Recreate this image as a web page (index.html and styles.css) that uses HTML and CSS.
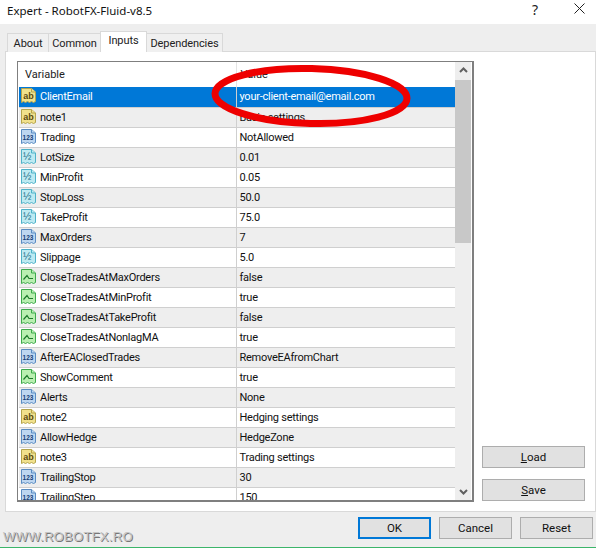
FILE: index.html
```html
<!DOCTYPE html>
<html>
<head>
  <title>Expert - RobotFX-Fluid-v8.5</title>
  <link rel="stylesheet" href="styles.css">
</head>
<body>
  <svg class="defs" width="0" height="0">
    <symbol id="page" viewBox="0 0 17 17">
      <path d="M1.500 1.500H11.500L15.500 5V14.500L13.500 15.500 11.500 14.500 9.500 15.500 7.500 14.500 5.500 15.500 3.500 14.500 1.500 15.500Z"/>
      <path class="fold" d="M11.500 1.500V5H15.500"/>
    </symbol>
  </svg>

  <header class="titlebar">
    <span class="title">Expert - RobotFX-Fluid-v8.5</span>
    <span class="help">?</span>
    <svg class="close" width="11" height="11" viewBox="0 0 11 11"><path d="M.5.5L10.500 10.500M10.500.5L.5 10.500"/></svg>
  </header>

  <nav class="tabs">
    <a class="tab about">About</a>
    <a class="tab common">Common</a>
    <a class="tab active">Inputs</a>
    <a class="tab deps">Dependencies</a>
  </nav>

  <main class="panel">
    <div class="list">
      <div class="list-body">
        <table class="inputs">
          <thead>
            <tr><th class="col-name">Variable</th><th>Value</th></tr>
          </thead>
          <tbody>
            <tr class="selected"><td><svg class="ic str" viewBox="0 0 17 17"><use href="#page"/><text x="3.200" y="11.500" class="ic-big">ab</text></svg>ClientEmail</td><td>your-client-email@email.com</td></tr>
            <tr class="odd"><td><svg class="ic str" viewBox="0 0 17 17"><use href="#page"/><text x="3.200" y="11.500" class="ic-big">ab</text></svg>note1</td><td>Basic settings</td></tr>
            <tr><td><svg class="ic int" viewBox="0 0 17 17"><use href="#page"/><text x="2.600" y="11.500" class="ic-small">123</text></svg>Trading</td><td>NotAllowed</td></tr>
            <tr class="odd"><td><svg class="ic dbl" viewBox="0 0 17 17"><use href="#page"/><text x="3" y="11.500" class="ic-mid">½</text></svg>LotSize</td><td>0.01</td></tr>
            <tr><td><svg class="ic dbl" viewBox="0 0 17 17"><use href="#page"/><text x="3" y="11.500" class="ic-mid">½</text></svg>MinProfit</td><td>0.05</td></tr>
            <tr class="odd"><td><svg class="ic dbl" viewBox="0 0 17 17"><use href="#page"/><text x="3" y="11.500" class="ic-mid">½</text></svg>StopLoss</td><td>50.0</td></tr>
            <tr><td><svg class="ic dbl" viewBox="0 0 17 17"><use href="#page"/><text x="3" y="11.500" class="ic-mid">½</text></svg>TakeProfit</td><td>75.0</td></tr>
            <tr class="odd"><td><svg class="ic int" viewBox="0 0 17 17"><use href="#page"/><text x="2.600" y="11.500" class="ic-small">123</text></svg>MaxOrders</td><td>7</td></tr>
            <tr><td><svg class="ic dbl" viewBox="0 0 17 17"><use href="#page"/><text x="3" y="11.500" class="ic-mid">½</text></svg>Slippage</td><td>5.0</td></tr>
            <tr class="odd"><td><svg class="ic bool" viewBox="0 0 17 17"><use href="#page"/><path class="trend" d="M3.500 11.500L7 7.500 9 10.500H13"/></svg>CloseTradesAtMaxOrders</td><td>false</td></tr>
            <tr><td><svg class="ic bool" viewBox="0 0 17 17"><use href="#page"/><path class="trend" d="M3.500 11.500L7 7.500 9 10.500H13"/></svg>CloseTradesAtMinProfit</td><td>true</td></tr>
            <tr class="odd"><td><svg class="ic bool" viewBox="0 0 17 17"><use href="#page"/><path class="trend" d="M3.500 11.500L7 7.500 9 10.500H13"/></svg>CloseTradesAtTakeProfit</td><td>false</td></tr>
            <tr><td><svg class="ic bool" viewBox="0 0 17 17"><use href="#page"/><path class="trend" d="M3.500 11.500L7 7.500 9 10.500H13"/></svg>CloseTradesAtNonlagMA</td><td>true</td></tr>
            <tr class="odd"><td><svg class="ic int" viewBox="0 0 17 17"><use href="#page"/><text x="2.600" y="11.500" class="ic-small">123</text></svg>AfterEAClosedTrades</td><td>RemoveEAfromChart</td></tr>
            <tr><td><svg class="ic bool" viewBox="0 0 17 17"><use href="#page"/><path class="trend" d="M3.500 11.500L7 7.500 9 10.500H13"/></svg>ShowComment</td><td>true</td></tr>
            <tr class="odd"><td><svg class="ic int" viewBox="0 0 17 17"><use href="#page"/><text x="2.600" y="11.500" class="ic-small">123</text></svg>Alerts</td><td>None</td></tr>
            <tr><td><svg class="ic str" viewBox="0 0 17 17"><use href="#page"/><text x="3.200" y="11.500" class="ic-big">ab</text></svg>note2</td><td>Hedging settings</td></tr>
            <tr class="odd"><td><svg class="ic int" viewBox="0 0 17 17"><use href="#page"/><text x="2.600" y="11.500" class="ic-small">123</text></svg>AllowHedge</td><td>HedgeZone</td></tr>
            <tr><td><svg class="ic str" viewBox="0 0 17 17"><use href="#page"/><text x="3.200" y="11.500" class="ic-big">ab</text></svg>note3</td><td>Trading settings</td></tr>
            <tr class="odd"><td><svg class="ic int" viewBox="0 0 17 17"><use href="#page"/><text x="2.600" y="11.500" class="ic-small">123</text></svg>TrailingStop</td><td>30</td></tr>
            <tr><td><svg class="ic int" viewBox="0 0 17 17"><use href="#page"/><text x="2.600" y="11.500" class="ic-small">123</text></svg>TrailingStep</td><td>150</td></tr>
          </tbody>
        </table>
      </div>
      <div class="scrollbar">
        <svg class="arrow" width="9" height="6" viewBox="0 0 9 6"><path d="M1 5L4.500 1.500 8 5"/></svg>
        <div class="thumb"></div>
        <svg class="arrow down" width="9" height="6" viewBox="0 0 9 6"><path d="M1 1L4.500 4.500 8 1"/></svg>
      </div>
    </div>
    <div class="side">
      <button class="btn wide"><u>L</u>oad</button>
      <button class="btn wide"><u>S</u>ave</button>
    </div>
  </main>

  <footer class="bottom">
    <span class="watermark">WWW.ROBOTFX.RO</span>
    <div class="actions">
      <button class="btn default">OK</button>
      <button class="btn">Cancel</button>
      <button class="btn">Reset</button>
    </div>
  </footer>

  <!-- red marker drawn over the list -->
  <svg class="marker" width="204" height="68" viewBox="0 0 204 68">
    <ellipse cx="102" cy="34" rx="96" ry="27.500" transform="rotate(1.500 102 34)"/>
  </svg>
</body>
</html>
```
FILE: styles.css
```css
* {
  box-sizing: border-box;
}

body {
  position: relative;
  margin: 0;
  width: 596px;
  height: 548px;
  overflow: hidden;
  background-color: #eeeeee;
  border-bottom: 1px solid #3cb56a;
  font-family: Roboto, "Liberation Sans", sans-serif;
  font-size: 11px;
  color: #111;
}

.defs {
  position: absolute;
}

/* Title bar */
.titlebar {
  display: flex;
  align-items: center;
  height: 24px;
  padding: 0 11px 0 7px;
  background-color: #fff;
}

.title {
  flex: 1;
  font-family: "Noto Sans", sans-serif;
  font-size: 11.500px;
  position: relative;
  top: -2px;
}

.help {
  margin-right: 36px;
  font-family: "Noto Sans", sans-serif;
  font-size: 14px;
  color: #222;
  position: relative;
  top: -3px;
}

.close {
  position: relative;
  top: -4px;
}

.close path {
  stroke: #222;
  stroke-width: 1;
  fill: none;
}

/* Tabs */
.tabs {
  display: flex;
  align-items: flex-end;
  height: 28px;
  padding-left: 7px;
  margin-bottom: -1px;
}

.tab {
  height: 19px;
  padding-top: 2px;
  background-color: #f0f0f0;
  border: 1px solid #d9d9d9;
  border-bottom: none;
  border-left-width: 0;
  line-height: 15px;
  letter-spacing: -0.100px;
  text-align: center;
  color: #222;
}

.tab.about {
  width: 42px;
  border-left-width: 1px;
}

.tab.common {
  width: 52px;
}

.tab.deps {
  width: 76px;
}

.tab.active {
  position: relative;
  z-index: 1;
  width: 47px;
  height: 21px;
  background-color: #fff;
  padding-top: 1px;
  border-left-width: 1px;
  margin-left: -1px;
}

/* Panel */
.panel {
  display: flex;
  height: 461px;
  margin-left: 5px;
  padding: 9px 10px 9px 11px;
  background-color: #fff;
  border: 1px solid #d9d9d9;
}

.list {
  display: flex;
  flex-shrink: 0;
  width: 457px;
  height: 441px;
  border: 1px solid #7f7f7f;
  border-right-width: 2px;
  border-bottom-width: 2px;
  background-color: #fff;
}

.list-body {
  flex: 1;
  overflow: hidden;
  padding-left: 1px;
}

.inputs {
  width: 436px;
  border-collapse: collapse;
  table-layout: fixed;
}

.inputs th {
  height: 25px;
  padding: 0 0 0 4px;
  font-weight: normal;
  text-align: left;
  border-left: 1px solid #e4e4e4;
  color: #222;
}

.inputs th.col-name {
  width: 217px;
  padding-left: 6px;
  border-left: none;
}

.inputs td {
  height: 20px;
  padding: 0 0 0 3px;
  border-left: 1px solid #cfcfcf;
  border-bottom: 1px solid #cfcfcf;
  line-height: 19px;
  white-space: nowrap;
  overflow: hidden;
  letter-spacing: -0.250px;
}

.inputs td:first-child {
  padding-left: 1px;
  border-left: none;
}

.inputs tr.odd td {
  background-color: #eeeeee;
}

.inputs tr.selected td {
  background-color: #0078d7;
  color: #fff;
}

.ic {
  width: 17px;
  height: 17px;
  margin-right: 3px;
  vertical-align: -4px;
  stroke-width: 1;
}

.ic path {
  stroke: inherit;
  fill: inherit;
}

.ic path.fold {
  fill: none;
}

.ic path.trend {
  fill: none;
  stroke: #1d7a2c;
  stroke-width: 1.200;
}

.ic text {
  stroke: none;
  font-family: "Liberation Sans", sans-serif;
  letter-spacing: 0;
}

.ic-big {
  font-size: 9px;
  font-weight: bold;
  fill: #5a4a10;
}

.ic-mid {
  font-size: 10px;
  fill: #1c6f88;
}

.ic-small {
  font-size: 6.500px;
  font-weight: bold;
  fill: #173f77;
}

.str {
  fill: #f1e18c;
  stroke: #b5a54d;
}

.int {
  fill: #bdd6f0;
  stroke: #5a8cc2;
}

.dbl {
  fill: #bdeaf2;
  stroke: #4fb2c8;
}

.bool {
  fill: #b9efb1;
  stroke: #3daa4c;
}

/* Scrollbar */
.scrollbar {
  display: flex;
  flex-direction: column;
  align-items: stretch;
  flex-shrink: 0;
  width: 16px;
  margin-right: 1px;
  background-color: #eeeeee;
}

.arrow {
  display: block;
  margin: 5px auto 7px;
  flex-shrink: 0;
}

.arrow path {
  fill: none;
  stroke: #606060;
  stroke-width: 2;
}

.arrow.down {
  margin: auto auto 5px;
}

.thumb {
  height: 163px;
  background-color: #c8c8c8;
}

/* Buttons */
.btn {
  width: 73px;
  height: 22px;
  padding: 0;
  background-color: #e1e1e1;
  border: 1px solid #adadad;
  font-family: Roboto, "Liberation Sans", sans-serif;
  font-size: 11.500px;
  color: #111;
}

.btn.wide {
  width: 103px;
}

.btn.default {
  border: 2px solid #0078d7;
}

.side {
  display: flex;
  flex-direction: column;
  gap: 11px;
  margin-left: 8px;
  padding-top: 385px;
}

/* Bottom row */
.bottom {
  display: flex;
  align-items: flex-start;
  justify-content: space-between;
  padding: 5px 3px 0 3px;
}

.actions {
  display: flex;
  gap: 8px;
}

.watermark {
  margin-top: 12px;
  font-family: "Liberation Sans", sans-serif;
  font-size: 13px;
  color: #c4c4c4;
  text-shadow: 1px 1px 0 #777;
  letter-spacing: 0.300px;
}

/* hand-drawn marker */
.marker {
  position: absolute;
  left: 209px;
  top: 62px;
}

.marker ellipse {
  fill: none;
  stroke: #ee0000;
  stroke-width: 7;
}
```
